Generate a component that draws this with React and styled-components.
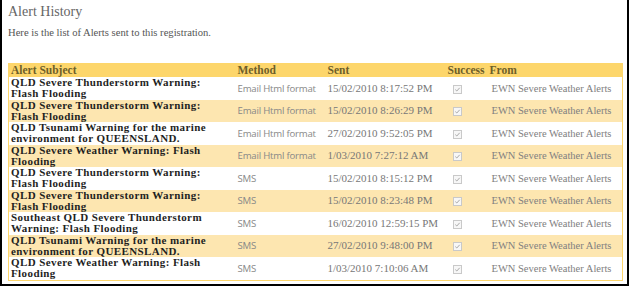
import React from "react";
import styled, { createGlobalStyle } from "styled-components";

const alerts = [
  ["QLD Severe Thunderstorm Warning: Flash Flooding", "Email Html format", "15/02/2010 8:17:52 PM"],
  ["QLD Severe Thunderstorm Warning: Flash Flooding", "Email Html format", "15/02/2010 8:26:29 PM"],
  ["QLD Tsunami Warning for the marine environment for QUEENSLAND.", "Email Html format", "27/02/2010 9:52:05 PM"],
  ["QLD Severe Weather Warning: Flash Flooding", "Email Html format", "1/03/2010 7:27:12 AM"],
  ["QLD Severe Thunderstorm Warning: Flash Flooding", "SMS", "15/02/2010 8:15:12 PM"],
  ["QLD Severe Thunderstorm Warning: Flash Flooding", "SMS", "15/02/2010 8:23:48 PM"],
  ["Southeast QLD Severe Thunderstorm Warning: Flash Flooding", "SMS", "16/02/2010 12:59:15 PM"],
  ["QLD Tsunami Warning for the marine environment for QUEENSLAND.", "SMS", "27/02/2010 9:48:00 PM"],
  ["QLD Severe Weather Warning: Flash Flooding", "SMS", "1/03/2010 7:10:06 AM"],
];

const GlobalStyle = createGlobalStyle`
  body {
    margin: 0;
    background: #fff;
    font-family: "Liberation Serif", serif;
  }
`;

const Frame = styled.div`
  box-sizing: border-box;
  width: 629px;
  height: 286px;
  border: 2px solid #000;
  border-top: none;
  padding: 4px 5px 0 6px;
`;

const Title = styled.h2`
  margin: 0;
  font-size: 14px;
  font-weight: normal;
  color: #666;
  line-height: 16px;
`;

const Intro = styled.p`
  margin: 7px 0 0 0;
  font-size: 10.6px;
  color: #555;
  line-height: 12px;
`;

const Table = styled.table`
  margin-top: 24px;
  width: 615px;
  border-collapse: collapse;
  table-layout: fixed;
  border: 1px solid #fdd66b;
  font-size: 11px;
`;

const Head = styled.th`
  background: #fdd66b;
  color: #6e5f2a;
  font-weight: bold;
  text-align: left;
  padding: 0 0 0 ${(p) => p.$pad || 2}px;
  height: 13px;
  line-height: 13px;
  font-size: 11.5px;
  white-space: nowrap;
`;

const Row = styled.tr`
  background: ${(p) => (p.$alt ? "#fde6b0" : "#fff")};
  height: 22.5px;
`;

const Cell = styled.td`
  padding: 0 0 0 ${(p) => p.$pad || 2}px;
  line-height: 11.25px;
  vertical-align: middle;
  color: #777;
  white-space: nowrap;
`;

const SubjectCell = styled(Cell)`
  padding-right: 14px;
  color: #1f1f1f;
  font-size: 11px;
  letter-spacing: 0.4px;
  font-weight: bold;
  white-space: normal;
`;

const MethodCell = styled(Cell)`
  font-family: "Open Sans", "Liberation Sans", sans-serif;
  font-size: 9.6px;
  color: #888;
  letter-spacing: -0.2px;
`;

const FromCell = styled(Cell)`
  font-size: 10.5px;
  color: #808080;
`;

const Box = styled.span`
  display: inline-block;
  box-sizing: border-box;
  width: 9px;
  height: 9px;
  border: 1px solid #c9c9c9;
  background: #f7f7f7;
  vertical-align: middle;
  svg {
    display: block;
  }
`;

const Check = () => (
  <Box>
    <svg width="7" height="7" viewBox="0 0 7 7">
      <path d="M1.3 3.6 L2.8 5 L5.7 1.8" fill="none" stroke="#a8a8a8" strokeWidth="1" />
    </svg>
  </Box>
);

export default function App() {
  return (
    <>
      <GlobalStyle />
      <Frame>
        <Title>Alert History</Title>
        <Intro>Here is the list of Alerts sent to this registration.</Intro>
        <Table>
          <colgroup>
            <col style={{ width: 227 }} />
            <col style={{ width: 90 }} />
            <col style={{ width: 120 }} />
            <col style={{ width: 42 }} />
            <col />
          </colgroup>
          <thead>
            <tr>
              <Head>Alert Subject</Head>
              <Head>Method</Head>
              <Head>Sent</Head>
              <Head>Success</Head>
              <Head>From</Head>
            </tr>
          </thead>
          <tbody>
            {alerts.map(([subject, method, sent], i) => (
              <Row key={i} $alt={i % 2 === 1}>
                <SubjectCell>{subject}</SubjectCell>
                <MethodCell>{method}</MethodCell>
                <Cell>{sent}</Cell>
                <Cell $pad={7}>
                  <Check />
                </Cell>
                <FromCell $pad={4}>EWN Severe Weather Alerts</FromCell>
              </Row>
            ))}
          </tbody>
        </Table>
      </Frame>
    </>
  );
}
